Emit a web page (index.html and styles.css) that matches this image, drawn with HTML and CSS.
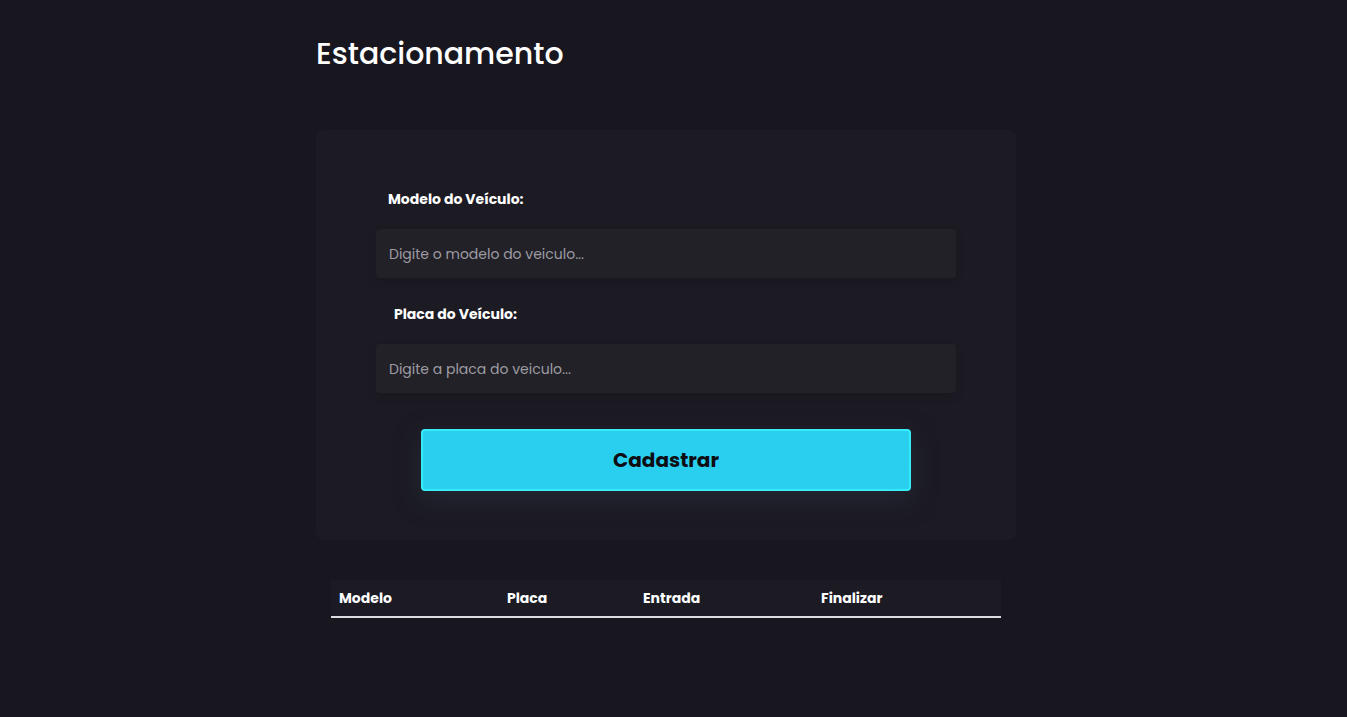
FILE: index.html
```html
<!DOCTYPE html>
<html lang="pt-BR">
<head>
<meta charset="utf-8">
<title>Estacionamento</title>
<link rel="stylesheet" href="styles.css">
</head>
<body>
<main class="container">
  <h1 class="title">Estacionamento</h1>
  <section class="card">
    <label class="label label-modelo" for="modelo">Modelo do Veículo:</label>
    <input class="field" id="modelo" type="text" placeholder="Digite o modelo do veiculo...">
    <label class="label label-placa" for="placa">Placa do Veículo:</label>
    <input class="field" id="placa" type="text" placeholder="Digite a placa do veiculo...">
    <button class="btn" type="button">Cadastrar</button>
  </section>
  <table class="table">
    <thead>
      <tr>
        <th class="col-modelo">Modelo</th>
        <th class="col-placa">Placa</th>
        <th class="col-entrada">Entrada</th>
        <th class="col-finalizar">Finalizar</th>
      </tr>
    </thead>
    <tbody></tbody>
  </table>
</main>
</body>
</html>
```
FILE: styles.css
```css
* { box-sizing: border-box; }
html, body {
  margin: 0;
  background: #18171f;
  color: #ffffff;
  font-family: "Poppins", "Open Sans", "Liberation Sans", sans-serif;
}
body { min-height: 717px; padding-right: 15px; }
.container {
  width: 700px;
  margin: 0 auto;
  padding-top: 30px;
  display: flex;
  flex-direction: column;
}
.title {
  margin: 0 0 52px 0;
  font-size: 30px;
  line-height: 48px;
  font-weight: 500;
  letter-spacing: 0;
}
.card {
  background: #1c1b24;
  border-radius: 8px;
  padding: 59px 60px 49px;
  display: flex;
  flex-direction: column;
}
.label {
  font-size: 14px;
  line-height: 20px;
  font-weight: 700;
  margin-bottom: 20px;
}
.label-modelo { margin-left: 12px; }
.label-placa { margin-left: 18px; margin-top: 26px; }
.field {
  width: 580px;
  height: 49px;
  border: none;
  border-radius: 4px;
  background: #222128;
  padding: 2px 13px 0;
  font-family: inherit;
  font-size: 14px;
  color: #ffffff;
  box-shadow: 0 4px 10px rgba(0,0,0,0.12);
  outline: none;
}
.field::placeholder { color: #9d9ca2; }
.btn {
  align-self: center;
  width: 490px;
  height: 62px;
  margin-top: 36px;
  background: #2acff0;
  border: 2px solid #36ecfb;
  border-radius: 4px;
  color: #0d0d12;
  font-family: inherit;
  font-size: 20px;
  font-weight: 700;
  box-shadow: 0 8px 24px rgba(40, 50, 62, 0.55);
  cursor: pointer;
}
.table {
  width: 670px;
  margin: 40px auto 0;
  border-collapse: collapse;
}
.table thead tr {
  background: #1c1b24;
  border-bottom: 2px solid #dcdce0;
}
.table th {
  height: 37px;
  padding: 1px 8px 0;
  text-align: left;
  font-size: 14px;
  font-weight: 700;
}
.col-modelo { width: 168px; }
.col-placa { width: 136px; }
.col-entrada { width: 178px; }
```
